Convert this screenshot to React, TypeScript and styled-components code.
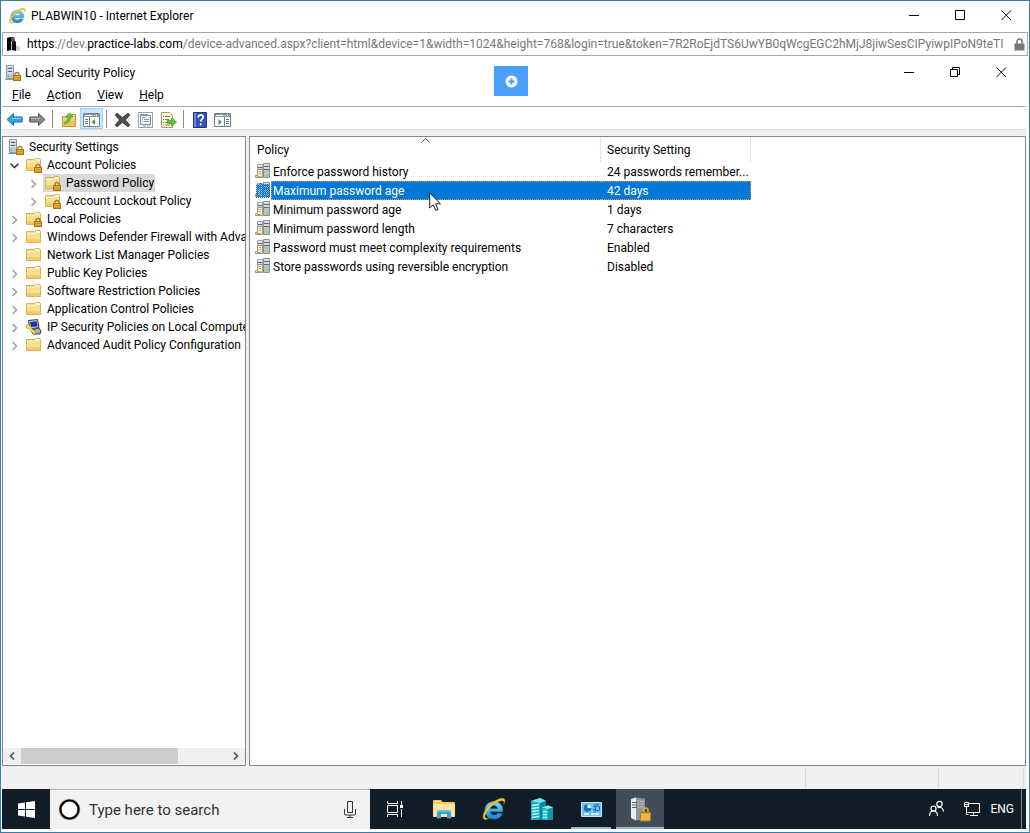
import React, { useState } from 'react';
import styled, { createGlobalStyle, css } from 'styled-components';

const GlobalStyle = createGlobalStyle`
  *, *::before, *::after { box-sizing: border-box; }
  body { margin: 0; background: #fff; }
  body, button, input, table {
    font-family: Roboto, "Segoe UI", "Open Sans", sans-serif;
    font-size: 12px;
    color: #000;
  }
  button { border: 0; padding: 0; margin: 0; background: transparent; cursor: default; }
  svg { display: block; flex: none; }
`;

const BrowserWindow = styled.div`
  display: flex;
  flex-direction: column;
  height: 100vh;
  overflow: hidden;
  border: 1px solid #3580ab;
  background: #fff;
`;

const TitleBar = styled.header<{ $inner?: boolean }>`
  display: flex;
  flex: none;
  align-items: center;
  height: ${p => (p.$inner ? 28 : 31)}px;
  padding: ${p => (p.$inner ? '5px 2px 0 3px' : '0 0 2px 7px')};
`;

const Title = styled.h1`
  flex: 1;
  margin: 0 0 0 5px;
  font-size: 12px;
  font-weight: 400;
  white-space: nowrap;
`;

const InnerTitle = styled(Title).attrs({ as: 'h2' })`
  margin-left: 4px;
`;

const CaptionButton = styled.button`
  display: flex;
  align-items: center;
  justify-content: center;
  width: 46px;
  padding-bottom: 1px;
  align-self: stretch;
`;

const AddressBar = styled.div`
  display: flex;
  flex: none;
  align-items: center;
  height: 24px;
  margin: 0 1px;
  padding: 0 2px 0 4px;
  border: 1px solid #a5a8ab;
`;

const AddressText = styled.button`
  flex: 1;
  min-width: 0;
  margin: 0 7px 0 5px;
  overflow: hidden;
  white-space: nowrap;
  text-align: left;
  line-height: 22px;
  color: #777;
`;

const AddressInput = styled.input`
  flex: 1;
  min-width: 0;
  margin: 0 7px 0 5px;
  padding: 0;
  border: 0;
  outline: 0;
`;

const Strong = styled.span`
  color: #000;
`;

const Desktop = styled.main`
  position: relative;
  display: flex;
  flex: 1;
  flex-direction: column;
  min-height: 0;
  margin: 0 3px 3px 1px;
`;

const ConnectionButton = styled.button`
  position: absolute;
  top: 10px;
  left: calc(50% - 20px);
  display: flex;
  align-items: center;
  justify-content: center;
  width: 34px;
  height: 30px;
  background: #4a9ffb;
`;

const MenuBar = styled.nav`
  display: flex;
  flex: none;
  height: 22px;
  padding-left: 2px;
`;

const MenuButton = styled.button`
  padding: 0 8px;
`;

const Toolbar = styled.div`
  display: flex;
  flex: none;
  align-items: center;
  height: 23px;
  padding: 1px 0 0 1px;
  border-top: 1px solid #a9a9a9;
`;

const ToolButton = styled.button<{ $active?: boolean }>`
  display: flex;
  align-items: center;
  justify-content: center;
  width: 23px;
  height: 21px;
  padding-top: 2px;
  ${p => p.$active && css`
    background: #cce8ff;
    border: 1px solid #99d1ff;
  `}
`;

const ToolSeparator = styled.span`
  width: 1px;
  height: 18px;
  margin: 0 4px 0 3px;
  background: #8c8c8c;
`;

const Workspace = styled.div`
  display: flex;
  flex: 1;
  min-height: 0;
  gap: 3px;
  padding-top: 6px;
  background: #f0f0f0;
  border-top: 1px solid #dfdfdf;
`;

const TreePane = styled.section`
  display: flex;
  flex: none;
  flex-direction: column;
  width: 244px;
  background: #fff;
  border: 1px solid #828790;
`;

const ListPane = styled.section`
  position: relative;
  flex: 1;
  min-width: 0;
  background: #fff;
  border: 1px solid #828790;
`;

const Tree = styled.ul`
  flex: 1;
  min-height: 0;
  margin: 0;
  padding: 1px 0 0;
  overflow: hidden;
  list-style: none;
`;

const TreeRow = styled.li<{ $level: number }>`
  display: flex;
  height: 18px;
  padding-left: ${p => (p.$level === 2 ? 19 : p.$level === 1 ? 0 : 3)}px;
`;

const Expander = styled.button`
  display: flex;
  flex: none;
  align-items: center;
  justify-content: center;
  width: 21px;
  padding-left: 2px;
`;

const ExpanderSpace = styled.span`
  flex: none;
  width: 21px;
`;

const TreeItem = styled.button<{ $selected?: boolean }>`
  display: flex;
  flex: none;
  align-items: center;
  gap: 5px;
  padding: 0 1px 0 2px;
  white-space: nowrap;
  background: ${p => (p.$selected ? '#d9d9d9' : 'transparent')};
`;

const ScrollBar = styled.div`
  display: flex;
  flex: none;
  height: 16px;
  margin-bottom: 1px;
  background: #f0f0f0;
`;

const ScrollButton = styled.button`
  display: flex;
  align-items: center;
  justify-content: center;
  width: 18px;
`;

const ScrollTrack = styled.div`
  flex: 1;
`;

const ScrollThumb = styled.div`
  width: 76%;
  height: 100%;
  background: #cdcdcd;
`;

const PolicyTable = styled.table`
  width: 501px;
  table-layout: fixed;
  border-spacing: 0;
`;

const HeadCell = styled.th<{ $width: number; $indent: number }>`
  position: relative;
  width: ${p => p.$width}px;
  height: 25px;
  padding: 1px 0 0 ${p => p.$indent}px;
  font-weight: 400;
  text-align: left;
  border-right: 1px solid #e2e2e2;
`;

const SortMark = styled.span`
  position: absolute;
  top: 1px;
  left: calc(50% - 4px);
`;

const Cell = styled.td`
  padding: 0;
`;

const NameCell = styled.div`
  display: flex;
  align-items: center;
  padding-left: 5px;
`;

const CellText = styled.div<{ $selected?: boolean; $side: 'left' | 'right' }>`
  flex: 1;
  height: 19px;
  padding: 2px 0 0 ${p => (p.$side === 'left' ? 1 : 6)}px;
  line-height: 15px;
  white-space: nowrap;
  border: 1px solid transparent;
  border-${p => (p.$side === 'left' ? 'right' : 'left')}-width: 0;
  ${p => p.$selected && css`
    color: #fff;
    background: #0078d7;
    border-color: #e09a4e;
    border-style: dotted;
  `}
`;

const Pointer = styled.span`
  position: absolute;
  top: 55px;
  left: 179px;
  pointer-events: none;
`;

const StatusBar = styled.footer`
  display: flex;
  flex: none;
  height: 23px;
  padding: 2px 2px 1px 0;
  background: #f0f0f0;
`;

const StatusCell = styled.span<{ $width?: number }>`
  flex: ${p => (p.$width ? `0 0 ${p.$width}px` : '1')};
  border-right: 1px solid #d7d7d7;
`;

const Taskbar = styled.nav`
  display: flex;
  flex: none;
  height: 40px;
  background: #101d28;
`;

const TaskButton = styled.button<{ $wide?: boolean; $state?: 'open' | 'active' }>`
  position: relative;
  display: flex;
  align-items: center;
  justify-content: center;
  width: ${p => (p.$wide ? 50 : 48)}px;
  margin-right: ${p => (p.$wide ? 0 : 1)}px;
  background: ${p => (p.$state === 'active' ? '#434d58' : 'transparent')};
  ${p => p.$state && css`
    &::after {
      content: '';
      position: absolute;
      bottom: 0;
      left: ${p.$state === 'active' ? 0 : 4}px;
      right: ${p.$state === 'active' ? 0 : 4}px;
      height: 2px;
      background: #8fb8dd;
    }
  `}
`;

const StartButton = styled.button`
  display: flex;
  align-items: center;
  justify-content: center;
  width: 48px;
`;

const SearchBox = styled.label`
  display: flex;
  align-items: center;
  width: 320px;
  padding: 0 14px 0 8px;
  background: #f2f2f2;
  border-top: 1px solid #b4b4b4;
`;

const SearchInput = styled.input`
  flex: 1;
  min-width: 0;
  margin-left: 8px;
  padding: 0;
  border: 0;
  outline: 0;
  background: transparent;
  font-size: 15px;
  &::placeholder { color: #333; opacity: 1; }
`;

const Tray = styled.div`
  display: flex;
  align-items: center;
  margin-left: auto;
`;

const TrayButton = styled.button`
  display: flex;
  align-items: center;
  height: 100%;
  padding: 0 9px;
  color: #fff;
`;

const LanguageButton = styled(TrayButton)`
  padding: 0 7px 0 0;
`;

const ShowDesktop = styled.button`
  width: 5px;
  height: 100%;
  border-left: 1px solid #7d858c;
`;

/* Icons */

const IeIcon = ({ size, id }: { size: number; id: string }) => (
  <svg width={size} height={size} viewBox="0 0 24 24">
    <defs>
      <linearGradient id={id} x1="0" y1="0" x2="0" y2="1">
        <stop offset="0" stopColor="#8fdcfb" />
        <stop offset="0.5" stopColor="#3fb3ea" />
        <stop offset="1" stopColor="#1c83cd" />
      </linearGradient>
    </defs>
    <path d="M12.3 4.2c-5 0-8.600 3.500-8.600 8.500s3.700 8.500 8.800 8.500c3.900 0 6.800-2 8-5.400h-4.900c-.6 1-1.700 1.500-3.100 1.500-2.100 0-3.500-1.200-3.700-3.200h12.100c.7-5.900-3-9.900-8.600-9.900zm-3.400 7c.3-1.900 1.600-3 3.500-3 2 0 3.300 1.100 3.500 3z" fill={`url(#${id})`} stroke="#1b76ba" strokeWidth=".5" />
    <path d="M3.600 21.600C-.4 20 3.600 11 10.500 5.700 15.700 1.700 21.200.1 22.600 2.300c.7 1.100.3 2.900-.8 4.900.4-1.500.4-2.600-.3-3.100-1.600-1.200-6 .4-10.200 3.900C5.800 12.600 2.600 18.200 4.200 20c.8.8 2.200.5 4-.4-1.700 1.500-3.400 2.300-4.600 2z" fill="#f5c32c" stroke="#cf9a17" strokeWidth=".3" />
  </svg>
);

const SiteIcon = () => (
  <svg width="15" height="16" viewBox="0 0 15 16">
    <path d="M0 2q3-1 4-1v13l-4 1z" fill="#000" />
    <path d="M4 1q4-1 4 3v2H4z" fill="#555" />
    <path d="M4 7h1v7H4z" fill="#bbb" />
    <path d="M5 6l3-1 1 1v9l-4-1z" fill="#111" />
    <path d="M9 2v7l4 2v3l-4 1" fill="#d0d0d0" />
  </svg>
);

const LockIcon = () => (
  <svg width="11" height="13" viewBox="0 0 11 13">
    <path d="M3 6V3.500a2.500 2.500 0 015 0V6" fill="none" stroke="#777" strokeWidth="1.500" />
    <rect x=".5" y="5.500" width="10" height="7" rx=".5" fill="#777" />
  </svg>
);

const CaptionGlyph = ({ kind }: { kind: 'min' | 'max' | 'restore' | 'close' }) => (
  <svg width="11" height="11" viewBox="0 0 11 11" fill="none" stroke="#000">
    {kind === 'min' && <path d="M0 5.500h10" />}
    {kind === 'max' && <path d="M.5.5h9v9H.5z" />}
    {kind === 'restore' && <path d="M.5 2.500h7v7h-7zM2.500 2.500v-2h7v7h-2" />}
    {kind === 'close' && <path d="M.5.5l9.500 9.500M10 .5l-9.500 9.500" />}
  </svg>
);

const Padlock = () => (
  <g>
    <path d="M10 11V9.500a2 2 0 014 0V11" fill="none" stroke="#9b7a2a" strokeWidth="1.300" />
    <rect x="8.500" y="10.500" width="7" height="5" fill="#e2ae35" stroke="#a87713" />
    <path d="M9 12.500h6M9 14.500h6" stroke="#bb8718" strokeWidth=".6" />
  </g>
);

const ServerLockIcon = () => (
  <svg width="16" height="16" viewBox="0 0 16 16">
    <path d="M1.500.5h7v13h-7z" fill="#b9c9d6" stroke="#8899a7" />
    <path d="M3 3.500h4M3 6.500h4" stroke="#526577" />
    <path d="M2 1.500h6M2 5h6M2 8h6" stroke="#eaf1f6" />
    <circle cx="3.500" cy="11" r=".8" fill="#4cb648" />
    <path d="M0 14.500h8" stroke="#8d9ba6" />
    <Padlock />
  </svg>
);

const FolderIcon = ({ locked }: { locked?: boolean }) => (
  <svg width="16" height="16" viewBox="0 0 16 16">
    <path d="M.5 2.500h8l1-1h4l1 1v11H.5z" fill="#f8dc8b" stroke="#d9b156" />
    <path d="M1 4h13v9H1z" fill="#f9df93" />
    <path d="M1 4.500h8l1-1h4" fill="none" stroke="#fff3c8" />
    <path d="M1 10h13v3H1z" fill="#f1cd6c" />
    <path d="M10 2.500h3" stroke="#fff" />
    {locked && <Padlock />}
  </svg>
);

const ComputerKeyIcon = () => (
  <svg width="16" height="16" viewBox="0 0 16 16">
    <path d="M2.500 1.500l9-1 1.500 8-9 1.500z" fill="#c9cdd6" stroke="#34384a" />
    <path d="M4 3l6.500-.8 1.200 5-6.500.8z" fill="#1732a4" />
    <path d="M5 11l8-2 2 3-1 3H7z" fill="#a9adb4" stroke="#34384a" />
    <path d="M.5 6.500a2 2 0 013-.5l.8 2 5 5v2H7.800L2.800 9.500.5 9z" fill="#f8e93c" stroke="#a29415" strokeWidth=".7" />
  </svg>
);

const Chevron = ({ open }: { open?: boolean }) => (
  <svg width="9" height="9" viewBox="0 0 9 9" fill="none" strokeWidth="1.700">
    {open ? <path d="M.5 2.500l4 4 4-4" stroke="#444" /> : <path d="M2.500 1l4 4-4 4" stroke="#a6a6a6" />}
  </svg>
);

const ScrollArrow = ({ right }: { right?: boolean }) => (
  <svg width="8" height="8" viewBox="0 0 8 8" fill="none" stroke="#555" strokeWidth="1.700">
    <path d={right ? 'M2 .5L5.500 4 2 7.500' : 'M6 .5L2.500 4 6 7.500'} />
  </svg>
);

const ArrowIcon = ({ forward }: { forward?: boolean }) => (
  <svg width="17" height="15" viewBox="0 0 17 15">
    <path
      d={forward ? 'M16 7.500L9.500 1.500V5H.8v5h8.700v3.500z' : 'M1 7.500l6.500-6V5h8.700v5H7.500v3.500z'}
      fill={forward ? '#8a8a8a' : '#32a4e3'}
      stroke={forward ? '#555' : '#1672ab'}
    />
    <path d={forward ? 'M2 6.500h9' : 'M6 6.500h9'} stroke={forward ? '#bbb' : '#8bd5f8'} />
  </svg>
);

const FolderUpIcon = () => (
  <svg width="16" height="16" viewBox="0 0 16 16">
    <path d="M1.500 4.500h7l1-2h5v12h-13z" fill="#f3d27b" stroke="#c49a3c" />
    <path d="M2 9h12v5H2z" fill="#edc35c" />
    <path d="M3 11c2-1 4-3 4-6H4.500L8.500.8 12 5H9.500c0 4-2.500 6.500-6.500 7z" fill="#67c83c" stroke="#3d9a22" strokeWidth=".7" />
  </svg>
);

const PanelIcon = ({ side }: { side: 'left' | 'right' }) => (
  <svg width="17" height="14" viewBox="0 0 17 14">
    <path d="M.5.5h16v13H.5z" fill="#fff" stroke="#75818b" />
    <path d="M1 1h15v3H1z" fill="#8c98a2" />
    <path d="M2 2.500h7M11 2.500h1M13 2.500h1" stroke="#fff" />
    <path d={side === 'left' ? 'M6.500 4v9.500' : 'M10.500 4v9.500'} stroke="#75818b" />
    <path d={side === 'left' ? 'M2 6.500h3M2 8.500h3M2 10.500h3' : 'M12 6.500h3M12 8.500h3M12 10.500h3'} stroke="#6b7d8d" />
    <path d={side === 'left' ? 'M12 6v6L8.500 9z' : 'M4.500 6v6L8 9z'} fill="#42a531" />
  </svg>
);

const DeleteIcon = () => (
  <svg width="17" height="16" viewBox="0 0 17 16">
    <path d="M3 1l5.500 4.500L14 1l2 2-4.500 5 4.500 5-2 2-5.500-4.500L3 15l-2-2 4.500-5L1 3z" fill="#4d4d4d" stroke="#333" strokeWidth=".7" />
  </svg>
);

const PropertiesIcon = () => (
  <svg width="15" height="16" viewBox="0 0 15 16">
    <path d="M.5.500h14v15H.5z" fill="#fff" stroke="#98a1a9" />
    <path d="M2.500 3.500h10v9h-10z" fill="#eef3f7" stroke="#7d93a5" />
    <path d="M2 2.500h8M4 5.500h3M4 7.500h1M6 7.500h5M4 9.500h1M6 9.500h5" stroke="#8299ab" />
    <path d="M5 14h3M9 14h3" stroke="#98a1a9" />
  </svg>
);

const ExportIcon = () => (
  <svg width="17" height="16" viewBox="0 0 17 16">
    <path d="M1.500.5h8l3 3v12h-11z" fill="#fdf8dc" stroke="#ab9c68" />
    <path d="M3 4.500h1M5 4.500h5M3 7.500h1M5 7.500h4M3 10.500h1M5 10.500h3M3 13h1M5 13h5" stroke="#777" />
    <path d="M7.500 8.500h4V6l5 4-5 4v-2.500h-4z" fill="#56c63b" stroke="#379423" strokeWidth=".7" />
  </svg>
);

const HelpIcon = () => (
  <svg width="14" height="16" viewBox="0 0 14 16">
    <path d="M.5.5h13v15H.5z" fill="#3353b5" stroke="#1c347f" />
    <path d="M1 1h2v14H1z" fill="#6d87d4" />
    <path d="M5.200 5.500c0-3.400 5-3.200 5-.4 0 2-2.500 2-2.500 4.400" fill="none" stroke="#fff" strokeWidth="1.700" />
    <circle cx="7.700" cy="12.300" r="1.100" fill="#fff" />
  </svg>
);

const PolicyIcon = ({ selected }: { selected?: boolean }) => (
  <svg width="16" height="17" viewBox="0 0 16 17">
    <defs>
      <pattern id="dither" width="2" height="2" patternUnits="userSpaceOnUse">
        <path d="M0 0h1v1H0zM1 1h1v1H1z" fill="#0078d7" />
      </pattern>
    </defs>
    <path d="M2.500 1.500h5v12h-5z" fill="#cfd9dd" stroke="#96a3aa" />
    <path d="M8.500.5h6v14h-6z" fill="#b7c3c8" stroke="#87949b" />
    <path d="M9 3.500h5M9 6.500h5M3 4.500h4" stroke="#5c6c74" />
    <path d="M9 2h5M9 5h5M3 3h4" stroke="#f1f6f8" />
    <path d="M11.500 11h2v2.500h-2z" fill="#7ed957" />
    <path d="M2.500 6.500h5v8H.5v-2h2z" fill="#fbf1cf" stroke="#a3966f" />
    <path d="M4 8.500h2M4 10.500h2M2 13.500h4" stroke="#b3a679" />
    {selected && <path d="M5 1h2v1h8v14H1V3h2z" fill="url(#dither)" />}
    {selected && <path d="M1 2h14v13H1z" fill="#0078d7" opacity=".3" />}
  </svg>
);

const PlusIcon = () => (
  <svg width="13" height="13" viewBox="0 0 13 13">
    <circle cx="6.500" cy="6.500" r="6" fill="#fff" />
    <path d="M6.500 3.500v6M3.500 6.500h6" stroke="#4a9ffb" strokeWidth="2" />
  </svg>
);

const PointerIcon = () => (
  <svg width="13" height="20" viewBox="0 0 13 20">
    <path d="M.7 1v15l3.600-3.300 2.500 5.800 2.300-1-2.500-5.700h4.900z" fill="#fff" stroke="#222" />
  </svg>
);

const WindowsIcon = () => (
  <svg width="17" height="17" viewBox="0 0 17 17" fill="#fff">
    <path d="M0 2.500l7-1V8H0zM8 1.300L17 0v8H8zM0 9h7v6.500l-7-1zM8 9h9v8l-9-1.300z" />
  </svg>
);

const CortanaIcon = () => (
  <svg width="23" height="23" viewBox="0 0 23 23">
    <circle cx="11.500" cy="11.500" r="9.500" fill="none" stroke="#a0a0a0" strokeWidth="2.500" />
    <circle cx="11.500" cy="11.500" r="9" fill="#fff" stroke="#000" strokeWidth="2.200" />
  </svg>
);

const MicIcon = () => (
  <svg width="12" height="17" viewBox="0 0 12 17" fill="none" stroke="#333">
    <path d="M3.500.500h5v11h-5z" />
    <path d="M.5 8v5q0 1 1 1h9q1 0 1-1V8M6 14v2M3 16.500h6" />
  </svg>
);

const TaskViewIcon = () => (
  <svg width="17" height="16" viewBox="0 0 17 16" fill="none" stroke="#fff">
    <path d="M.5 0v2.500h10V0M.5 16v-2.500h10V16M.5 4.500h10v7H.5zM14.500 0v4M14.500 8v8" />
    <path d="M13 4h3v3h-3z" fill="#fff" stroke="none" />
  </svg>
);

const ExplorerIcon = () => (
  <svg width="22" height="19" viewBox="0 0 22 19">
    <path d="M0 1q0-1 1-1h7l1.500 2H21q1 0 1 1v14H0z" fill="#f4c84f" />
    <path d="M0 4h22v13H0z" fill="#fde39b" />
    <path d="M2 1.500h5" stroke="#fff1c0" />
    <path d="M4 18.500V12q0-2 2-2h10q2 0 2 2v6.500h-4V14H8v4.500z" fill="#3a9edc" />
    <path d="M4 12q0-2 2-2h10q2 0 2 2z" fill="#68bbe9" />
  </svg>
);

const ServerManagerIcon = () => (
  <svg width="22" height="22" viewBox="0 0 22 22">
    <path d="M0 3l9-3 6 3v19H0z" fill="#16aebe" />
    <path d="M0 3l9-3 6 3-6 2z" fill="#74e7ee" />
    <path d="M9 5l6-2v19H9z" fill="#0c8797" />
    <path d="M1 7.500l7-1M1 10.500l7-1M1 13.500l7-1M1 16.500l7-1M1 19.500l7-1" stroke="#c9f8fa" strokeWidth="1.300" />
    <path d="M11 9.500l6-2 5 2V22H11z" fill="#18b8c8" />
    <path d="M11 9.500l6-2 5 2-5 1.500z" fill="#86eef4" />
    <path d="M17 11l5-1.500V22h-5z" fill="#0b97a8" />
    <path d="M12 13.500h4M12 16.500h4M12 19.500h4" stroke="#c9f8fa" strokeWidth="1.300" />
  </svg>
);

const ControlPanelIcon = () => (
  <svg width="21" height="15" viewBox="0 0 21 15">
    <path d="M.5.5h20v14H.5z" fill="#72bff0" stroke="#c3e7fb" />
    <circle cx="6.500" cy="6" r="3.800" fill="#1974b8" />
    <path d="M6.500 6V2.200A3.800 3.800 0 0110.300 6z" fill="#e7f6ff" />
    <path d="M12 4.500h2v-2h4M12 7.500h2v3M14.500 4.500h4v4h-4z" fill="none" stroke="#1b6eab" />
    <path d="M3 12h5M10 12h8" stroke="#fff" strokeWidth="1.500" />
  </svg>
);

const SecurityTaskIcon = () => (
  <svg width="22" height="25" viewBox="0 0 22 25">
    <path d="M2 2l5-1.500v23L2 21z" fill="#eceff1" />
    <path d="M7 .5l9 1V22L7 23.500z" fill="#8d9398" />
    <path d="M3 5.500h5M3 8h5M3 10.500h5" stroke="#515a62" />
    <path d="M8 4l7 .5M8 7h7M8 10h7" stroke="#b4babf" />
    <path d="M14 16v-2.500a2.500 2.500 0 015 0V16" fill="none" stroke="#d9a93a" strokeWidth="1.500" />
    <path d="M11.500 15.500h10V24h-10z" fill="#e3a92c" stroke="#b27d13" />
    <path d="M12 18h9M12 20h9M12 22h9" stroke="#f6d275" strokeWidth=".8" />
  </svg>
);

const PeopleIcon = () => (
  <svg width="18" height="18" viewBox="0 0 18 18" fill="none" stroke="#fff" strokeWidth="1.200">
    <circle cx="6.500" cy="8.500" r="2.500" />
    <path d="M2.500 16c0-3 1.500-5 4-5s4 2 4 5" />
    <circle cx="12.500" cy="4" r="2.700" />
    <path d="M10.500 8c3-2 6 .5 6 3.500" />
  </svg>
);

const NetworkIcon = () => (
  <svg width="18" height="16" viewBox="0 0 18 16" fill="none" stroke="#fff">
    <path d="M6 2.500h10.500v9H4.500M10.500 11.500v2M7 14.500h8M1.500 1.500h4v4h-4zM3.500 5.500v8h2M1.500 3.500h4" />
  </svg>
);

const captions = { min: 'Minimize', max: 'Maximize', restore: 'Restore', close: 'Close' };

const CaptionButtons = ({ kinds }: { kinds: Array<keyof typeof captions> }) => (
  <>
    {kinds.map(kind => (
      <CaptionButton key={kind} type="button" aria-label={captions[kind]}>
        <CaptionGlyph kind={kind} />
      </CaptionButton>
    ))}
  </>
);

type Node = { label: string; level: number; icon: 'root' | 'locked' | 'folder' | 'ipsec'; toggle?: 'open' | 'closed' };

const nodes: Node[] = [
  { label: 'Security Settings', level: 0, icon: 'root' },
  { label: 'Account Policies', level: 1, icon: 'locked', toggle: 'open' },
  { label: 'Password Policy', level: 2, icon: 'locked', toggle: 'closed' },
  { label: 'Account Lockout Policy', level: 2, icon: 'locked', toggle: 'closed' },
  { label: 'Local Policies', level: 1, icon: 'locked', toggle: 'closed' },
  { label: 'Windows Defender Firewall with Advanced Security', level: 1, icon: 'folder', toggle: 'closed' },
  { label: 'Network List Manager Policies', level: 1, icon: 'folder' },
  { label: 'Public Key Policies', level: 1, icon: 'folder', toggle: 'closed' },
  { label: 'Software Restriction Policies', level: 1, icon: 'folder', toggle: 'closed' },
  { label: 'Application Control Policies', level: 1, icon: 'folder', toggle: 'closed' },
  { label: 'IP Security Policies on Local Computer', level: 1, icon: 'ipsec', toggle: 'closed' },
  { label: 'Advanced Audit Policy Configuration', level: 1, icon: 'folder', toggle: 'closed' },
];

const policies = [
  ['Enforce password history', '24 passwords remember...'],
  ['Maximum password age', '42 days'],
  ['Minimum password age', '1 days'],
  ['Minimum password length', '7 characters'],
  ['Password must meet complexity requirements', 'Enabled'],
  ['Store passwords using reversible encryption', 'Disabled'],
];

const urlParts = {
  scheme: 'https',
  sub: '://dev.',
  domain: 'practice-labs.com',
  path: '/device-advanced.aspx?client=html&device=1&width=1024&height=768&login=true&token=7R2RoEjdTS6UwYB0qWcgEGC2hMjJ8jiwSesCIPyiwpIPoN9teTI',
};

const NodeIcon = ({ icon }: { icon: Node['icon'] }) => {
  if (icon === 'root') return <ServerLockIcon />;
  if (icon === 'ipsec') return <ComputerKeyIcon />;
  return <FolderIcon locked={icon === 'locked'} />;
};

export default function App() {
  const [editing, setEditing] = useState(false);
  const [node, setNode] = useState('Password Policy');
  const [policy, setPolicy] = useState('Maximum password age');

  return (
    <>
      <GlobalStyle />
      <BrowserWindow>
        <TitleBar>
          <IeIcon size={18} id="ie-title" />
          <Title>PLABWIN10 - Internet Explorer</Title>
          <CaptionButtons kinds={['min', 'max', 'close']} />
        </TitleBar>
        <AddressBar>
          <SiteIcon />
          {editing ? (
            <AddressInput
              aria-label="Address"
              autoFocus
              defaultValue={Object.values(urlParts).join('')}
              onBlur={() => setEditing(false)}
            />
          ) : (
            <AddressText type="button" onClick={() => setEditing(true)}>
              <Strong>{urlParts.scheme}</Strong>
              {urlParts.sub}
              <Strong>{urlParts.domain}</Strong>
              {urlParts.path}
            </AddressText>
          )}
          <LockIcon />
        </AddressBar>

        <Desktop>
          <TitleBar $inner>
            <ServerLockIcon />
            <InnerTitle>Local Security Policy</InnerTitle>
            <CaptionButtons kinds={['min', 'restore', 'close']} />
          </TitleBar>
          <ConnectionButton type="button" aria-label="Open controls">
            <PlusIcon />
          </ConnectionButton>
          <MenuBar>
            {['File', 'Action', 'View', 'Help'].map(name => (
              <MenuButton key={name} type="button">
                <u>{name[0]}</u>{name.slice(1)}
              </MenuButton>
            ))}
          </MenuBar>
          <Toolbar role="toolbar">
            <ToolButton type="button" aria-label="Back"><ArrowIcon /></ToolButton>
            <ToolButton type="button" aria-label="Forward"><ArrowIcon forward /></ToolButton>
            <ToolSeparator />
            <ToolButton type="button" aria-label="Up one level"><FolderUpIcon /></ToolButton>
            <ToolButton type="button" aria-label="Show console tree" $active><PanelIcon side="left" /></ToolButton>
            <ToolSeparator />
            <ToolButton type="button" aria-label="Delete"><DeleteIcon /></ToolButton>
            <ToolButton type="button" aria-label="Properties"><PropertiesIcon /></ToolButton>
            <ToolButton type="button" aria-label="Export list"><ExportIcon /></ToolButton>
            <ToolSeparator />
            <ToolButton type="button" aria-label="Help"><HelpIcon /></ToolButton>
            <ToolButton type="button" aria-label="Show action pane"><PanelIcon side="right" /></ToolButton>
          </Toolbar>

          <Workspace>
            <TreePane>
              <Tree>
                {nodes.map(n => (
                  <TreeRow key={n.label} $level={n.level}>
                    {n.toggle ? (
                      <Expander type="button" aria-label={`Toggle ${n.label}`}>
                        <Chevron open={n.toggle === 'open'} />
                      </Expander>
                    ) : (
                      n.level > 0 && <ExpanderSpace />
                    )}
                    <TreeItem type="button" $selected={n.label === node} onClick={() => setNode(n.label)}>
                      <NodeIcon icon={n.icon} />
                      {n.label}
                    </TreeItem>
                  </TreeRow>
                ))}
              </Tree>
              <ScrollBar>
                <ScrollButton type="button" aria-label="Scroll left"><ScrollArrow /></ScrollButton>
                <ScrollTrack><ScrollThumb /></ScrollTrack>
                <ScrollButton type="button" aria-label="Scroll right"><ScrollArrow right /></ScrollButton>
              </ScrollBar>
            </TreePane>

            <ListPane>
              <PolicyTable>
                <thead>
                  <tr>
                    <HeadCell $width={351} $indent={7}>
                      Policy
                      <SortMark>
                        <svg width="9" height="5" viewBox="0 0 9 5" fill="none" stroke="#555">
                          <path d="M.5 4.500l4-4 4 4" />
                        </svg>
                      </SortMark>
                    </HeadCell>
                    <HeadCell $width={150} $indent={6}>Security Setting</HeadCell>
                  </tr>
                </thead>
                <tbody>
                  {policies.map(([name, setting]) => {
                    const selected = name === policy;
                    return (
                      <tr key={name} onClick={() => setPolicy(name)}>
                        <Cell>
                          <NameCell>
                            <PolicyIcon selected={selected} />
                            <CellText $side="left" $selected={selected}>{name}</CellText>
                          </NameCell>
                        </Cell>
                        <Cell>
                          <CellText $side="right" $selected={selected}>{setting}</CellText>
                        </Cell>
                      </tr>
                    );
                  })}
                </tbody>
              </PolicyTable>
              <Pointer><PointerIcon /></Pointer>
            </ListPane>
          </Workspace>

          <StatusBar>
            <StatusCell />
            <StatusCell $width={133} />
            <StatusCell $width={85} />
          </StatusBar>

          <Taskbar>
            <StartButton type="button" aria-label="Start"><WindowsIcon /></StartButton>
            <SearchBox>
              <CortanaIcon />
              <SearchInput aria-label="Search" placeholder="Type here to search" />
              <MicIcon />
            </SearchBox>
            <TaskButton type="button" $wide aria-label="Task view"><TaskViewIcon /></TaskButton>
            <TaskButton type="button" aria-label="File Explorer"><ExplorerIcon /></TaskButton>
            <TaskButton type="button" aria-label="Internet Explorer"><IeIcon size={25} id="ie-task" /></TaskButton>
            <TaskButton type="button" aria-label="Server Manager"><ServerManagerIcon /></TaskButton>
            <TaskButton type="button" aria-label="Control Panel" $state="open"><ControlPanelIcon /></TaskButton>
            <TaskButton type="button" aria-label="Local Security Policy" $state="active"><SecurityTaskIcon /></TaskButton>
            <Tray>
              <TrayButton type="button" aria-label="People"><PeopleIcon /></TrayButton>
              <TrayButton type="button" aria-label="Network"><NetworkIcon /></TrayButton>
              <LanguageButton type="button">ENG</LanguageButton>
              <ShowDesktop type="button" aria-label="Show desktop" />
            </Tray>
          </Taskbar>
        </Desktop>
      </BrowserWindow>
    </>
  );
}
